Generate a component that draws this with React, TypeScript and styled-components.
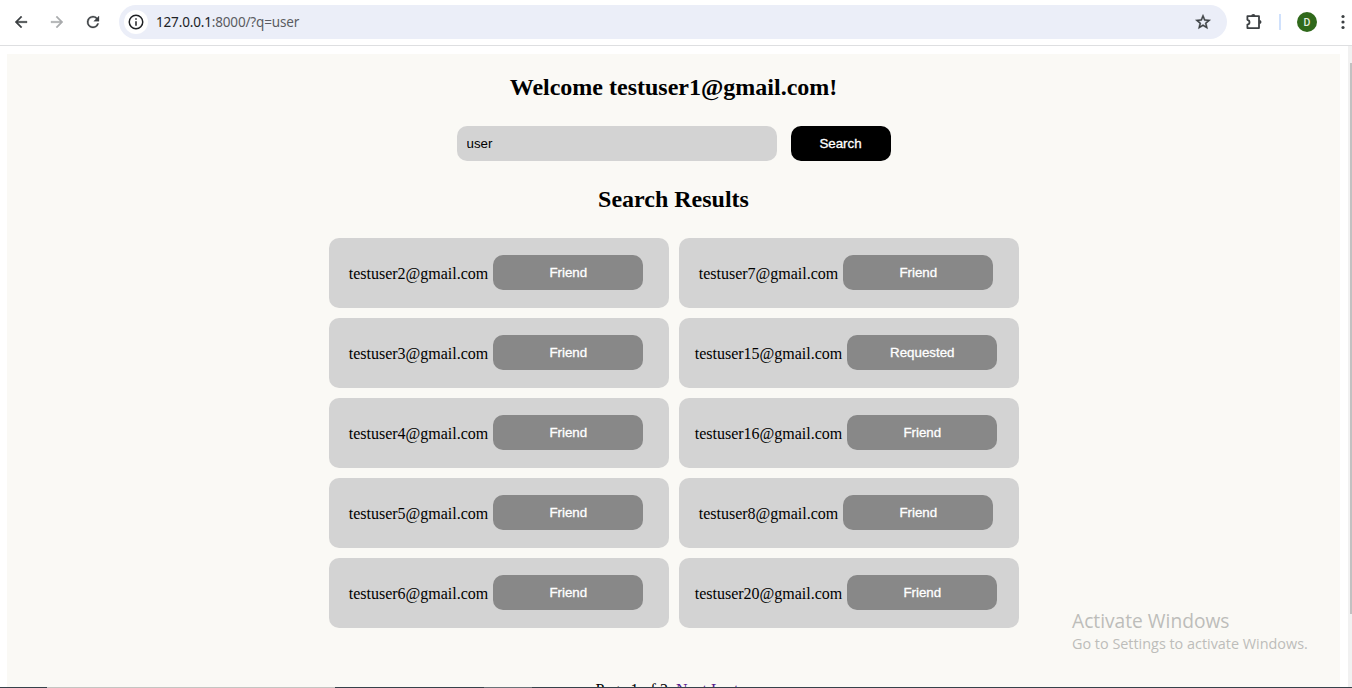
import React from "react";
import styled, { createGlobalStyle } from "styled-components";

const GlobalStyle = createGlobalStyle`
  * { box-sizing: border-box; }
  html, body { margin: 0; background: #fff; overflow: hidden; }
`;

const Window = styled.div`
  position: relative;
  width: 1352px;
  height: 688px;
  display: flex;
  flex-direction: column;
  overflow: hidden;
  background: #fff;
`;

const Toolbar = styled.header`
  height: 46px;
  flex: none;
  display: flex;
  align-items: center;
  padding: 0 0 2px 12px;
  border-bottom: 1px solid #dedfe1;
`;

const NavIcons = styled.div`
  display: flex;
  gap: 18px;
`;

const Icon = styled.svg<{ $color?: string }>`
  display: block;
  flex: none;
  width: 18px;
  height: 18px;
  fill: ${(p) => p.$color ?? "#3c4043"};
`;

const AddressBar = styled.div`
  display: flex;
  align-items: center;
  width: 1108px;
  height: 34px;
  margin-left: 17px;
  padding: 0 15px 0 5px;
  border-radius: 17px;
  background: #ebeef8;
`;

const SiteInfo = styled.span`
  display: grid;
  place-items: center;
  width: 24px;
  height: 24px;
  border-radius: 50%;
  background: #fff;
`;

const Url = styled.span`
  flex: 1;
  margin-left: 8px;
  padding-top: 1px;
  font: 13.5px/20px "Noto Sans", sans-serif;
  letter-spacing: -0.16px;
  color: #5a5c61;

  b {
    font-weight: 400;
    color: #202226;
  }
`;

const Actions = styled.div`
  display: flex;
  align-items: center;
  margin-left: 18px;
`;

const Divider = styled.span`
  width: 2px;
  height: 16px;
  margin-left: 16px;
  background: #d0e1fc;
`;

const Avatar = styled.span`
  width: 20px;
  height: 20px;
  margin: 0 17px 0 16px;
  border-radius: 50%;
  background: #30691b;
  color: #e6eee2;
  font: 500 10.5px/21px Roboto, sans-serif;
  text-align: center;
`;

const Viewport = styled.div`
  flex: 1;
  min-height: 0;
  display: flex;
`;

const Page = styled.main`
  flex: 1;
  display: flex;
  flex-direction: column;
  align-items: center;
  margin: 8px 8px 0 7px;
  background: #faf9f5;
  color: #000;
  font: 16px/18px "Liberation Serif", "Times New Roman", serif;
`;

const Heading = styled.h2`
  margin: 20px 0 0;
  font-size: 24px;
  line-height: 27px;
  font-weight: 700;
`;

const SearchForm = styled.form`
  display: flex;
  gap: 14px;
  margin: 25px 0 5px 1px;
`;

const SearchInput = styled.input`
  width: 320px;
  height: 35px;
  padding: 0 9.5px 1px;
  border: 0;
  border-radius: 10px;
  background: #d3d3d3;
  color: #000;
  font: 13.333px "Liberation Sans", Arial, sans-serif;
`;

const Button = styled.button<{ $tone: "primary" | "muted" }>`
  width: ${(p) => (p.$tone === "primary" ? 100 : 150)}px;
  height: 35px;
  padding: ${(p) => (p.$tone === "primary" ? "0 1px 1px 0" : "0 0 1px 1px")};
  border: 0;
  border-radius: 10px;
  background: ${(p) => (p.$tone === "primary" ? "#000" : "#888")};
  color: #fff;
  font: 13.333px "Liberation Sans", Arial, sans-serif;
  -webkit-text-stroke: 0.3px #fff;
`;

const Results = styled.section`
  display: grid;
  grid-template-columns: 340px 340px;
  grid-auto-rows: 70px;
  gap: 10px;
  margin: 25px 0 0 1px;
`;

const Card = styled.article`
  display: flex;
  align-items: center;
  justify-content: center;
  gap: 4.5px;
  padding: 0 6.5px 1px 0;
  border-radius: 10px;
  background: #d3d3d3;
`;

const Email = styled.span`
  padding-top: 2px;
`;

const Pagination = styled.nav`
  margin: 53px 0 0 -13px;
  white-space: nowrap;

  a {
    color: #551a8b;
    text-decoration: underline;
  }
`;

const ScrollTrack = styled.div`
  width: 4px;
  padding: 17px 0 0 2px;
  background: #f1f1f1;
`;

const ScrollThumb = styled.div`
  height: 551px;
  background: #c1c1c1;
`;

const Watermark = styled.aside`
  position: absolute;
  left: 1072px;
  top: 608px;
  color: #bdbdba;
  font: 14.4px/20px "Open Sans", sans-serif;
  white-space: nowrap;

  strong {
    display: block;
    font-size: 19.2px;
    font-weight: 400;
    line-height: 26px;
  }
`;

const TaskbarEdge = styled.footer`
  position: absolute;
  inset: auto 0 0;
  height: 1px;
  display: flex;
  background: #36424a;
`;

const TaskbarItem = styled.span<{ $start: number; $width: number; $color: string }>`
  width: ${(p) => p.$width}px;
  margin-left: ${(p) => p.$start}px;
  background: ${(p) => p.$color};
`;

const users = [
  ["testuser2@gmail.com", "Friend"],
  ["testuser7@gmail.com", "Friend"],
  ["testuser3@gmail.com", "Friend"],
  ["testuser15@gmail.com", "Requested"],
  ["testuser4@gmail.com", "Friend"],
  ["testuser16@gmail.com", "Friend"],
  ["testuser5@gmail.com", "Friend"],
  ["testuser8@gmail.com", "Friend"],
  ["testuser6@gmail.com", "Friend"],
  ["testuser20@gmail.com", "Friend"],
];

export default function App() {
  return (
    <>
      <GlobalStyle />
      <Window>
        <Toolbar>
          <NavIcons>
            <Icon viewBox="0 0 24 24">
              <path d="M20 11H7.83l5.59-5.59L12 4l-8 8 8 8 1.41-1.41L7.83 13H20z" stroke="#3c4043" strokeWidth=".5" />
            </Icon>
            <Icon viewBox="0 0 24 24" $color="#a9abad">
              <path d="m12 4-1.41 1.41L16.17 11H4v2h12.17l-5.58 5.59L12 20l8-8z" stroke="#a9abad" strokeWidth=".5" />
            </Icon>
            <Icon viewBox="0 0 24 24">
              <path d="M17.65 6.35A7.96 7.96 0 0 0 12 4a8 8 0 1 0 7.73 10h-2.08A6 6 0 1 1 12 6c1.66 0 3.14.69 4.22 1.78L13 11h7V4z" stroke="#3c4043" strokeWidth=".4" />
            </Icon>
          </NavIcons>
          <AddressBar>
            <SiteInfo>
              <Icon viewBox="0 0 24 24" $color="#1f2124">
                <path d="M11 7h2v2h-2zm0 4h2v6h-2zm1-9a10 10 0 1 0 0 20 10 10 0 0 0 0-20m0 18a8 8 0 1 1 0-16 8 8 0 0 1 0 16" />
              </Icon>
            </SiteInfo>
            <Url>
              <b>127.0.0.1</b>:8000/?q=user
            </Url>
            <Icon viewBox="0 0 24 24">
              <path d="m22 9.24-7.19-.62L12 2 9.19 8.63 2 9.24l5.46 4.73L5.82 21 12 17.27 18.18 21l-1.63-7.03zM12 15.4l-3.76 2.27 1-4.28-3.32-2.88 4.38-.38L12 6.1l1.71 4.04 4.38.38-3.32 2.88 1 4.28z" stroke="#3c4043" strokeWidth=".6" />
            </Icon>
          </AddressBar>
          <Actions>
            <Icon viewBox="0 0 18 18">
              <path d="M2.4 3.2H14V15.1H2.4V11.6C5.2 11 5.2 7.4 2.4 6.8Z" fill="none" stroke="#3c4043" strokeWidth="1.8" strokeLinejoin="round" />
              <path d="M6.2 3a2.1 2.1 0 0 1 4.2 0zM14.4 6.9a2.1 2.1 0 0 1 0 4.2z" />
            </Icon>
            <Divider />
            <Avatar>D</Avatar>
            <Icon viewBox="0 0 18 18">
              <circle cx="9" cy="3.5" r="1.6" />
              <circle cx="9" cy="9" r="1.6" />
              <circle cx="9" cy="14.5" r="1.6" />
            </Icon>
          </Actions>
        </Toolbar>
        <Viewport>
          <Page>
            <Heading>Welcome testuser1@gmail.com!</Heading>
            <SearchForm onSubmit={(e) => e.preventDefault()}>
              <SearchInput defaultValue="user" />
              <Button $tone="primary">Search</Button>
            </SearchForm>
            <Heading>Search Results</Heading>
            <Results>
              {users.map(([email, status]) => (
                <Card key={email}>
                  <Email>{email}</Email>
                  <Button $tone="muted">{status}</Button>
                </Card>
              ))}
            </Results>
            <Pagination>
              Page 1 of 2. <a href="#next">Next</a> <a href="#last">Last</a>
            </Pagination>
          </Page>
          <ScrollTrack>
            <ScrollThumb />
          </ScrollTrack>
        </Viewport>
        <Watermark>
          <strong>Activate Windows</strong>
          Go to Settings to activate Windows.
        </Watermark>
        <TaskbarEdge>
          <TaskbarItem $start={47} $width={288} $color="#c4c5c2" />
          <TaskbarItem $start={149} $width={48} $color="#6a7378" />
        </TaskbarEdge>
      </Window>
    </>
  );
}
